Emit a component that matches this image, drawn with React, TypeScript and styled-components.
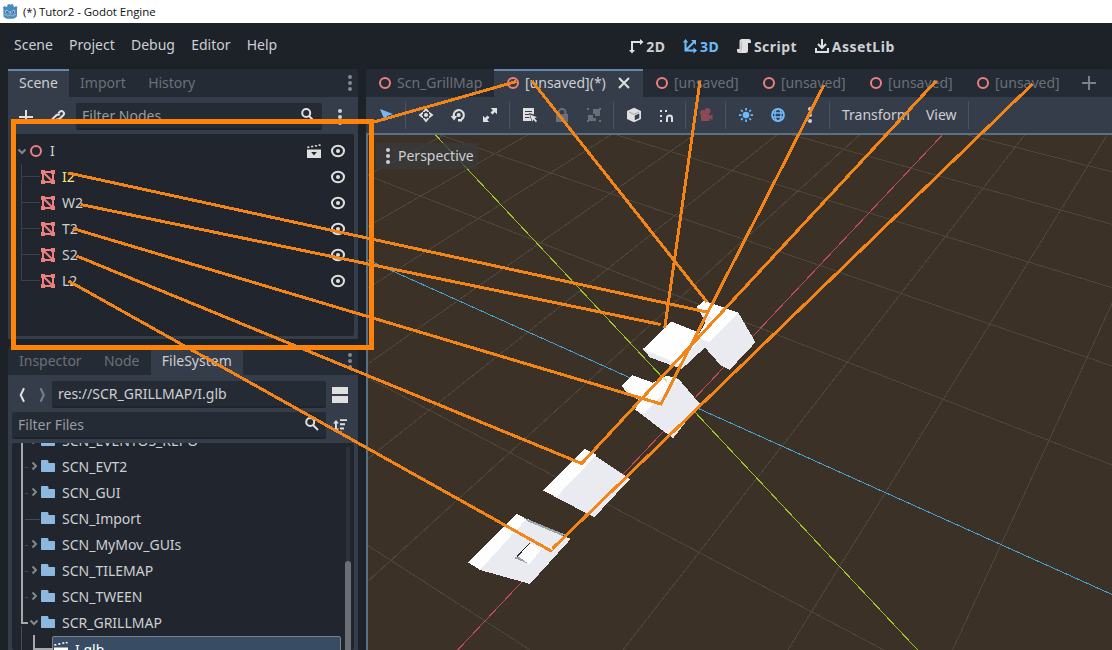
import React from 'react';
import styled, { createGlobalStyle, css } from 'styled-components';

const GlobalStyle = createGlobalStyle`
  *, *::before, *::after { box-sizing: border-box; }
  body {
    margin: 0;
    background: #1d2229;
    overflow: hidden;
    font-family: "Noto Sans", sans-serif;
    font-size: 14px;
    color: #cdcfd2;
  }
  svg { display: block; flex: none; }
`;

const Window = styled.div`
  position: relative;
  display: flex;
  flex-direction: column;
  width: 1112px;
  height: 650px;
  overflow: hidden;
  white-space: nowrap;
`;

const TitleBar = styled.div`
  display: flex;
  align-items: center;
  flex: none;
  height: 23px;
  padding-left: 2px;
  gap: 5px;
  background: #fff;
  color: #111;
  font-family: "Open Sans", sans-serif;
  font-size: 11.5px;
  letter-spacing: -0.05px;
`;

const MenuBar = styled.div`
  display: flex;
  align-items: center;
  flex: none;
  height: 46px;
  padding: 0 0 3px 6px;
`;

const MenuItem = styled.div`
  padding: 0 8.2px 1px 8px;
`;

const Workspaces = styled.div`
  display: flex;
  margin-left: 343px;
  padding-top: 3px;
  gap: 16.5px;
`;

const Workspace = styled.div<{ $active?: boolean }>`
  display: flex;
  align-items: center;
  gap: 2px;
  font-weight: 700;
  letter-spacing: 0.5px;
  color: ${(p) => (p.$active ? '#70bafa' : '#cdcfd2')};
`;

const Body = styled.div`
  display: flex;
  flex: 1;
  min-height: 0;
  gap: 8px;
  padding-left: 8px;
`;

const LeftColumn = styled.div`
  display: flex;
  flex-direction: column;
  flex: none;
  width: 350px;
  gap: 8px;
`;

const Dock = styled.section<{ $height?: number }>`
  display: flex;
  flex-direction: column;
  min-height: 0;
  ${(p) => (p.$height ? css`flex: none; height: ${p.$height}px;` : css`flex: 1;`)}
  background: #363d4a;
  border-radius: 3px 3px 0 0;
`;

const TabBar = styled.div`
  display: flex;
  align-items: center;
  flex: none;
  height: 28px;
  background: #252b34;
  border-radius: 2px 2px 0 0;
`;

const Tab = styled.div<{ $active?: boolean; $plain?: boolean; $w?: number }>`
  display: flex;
  align-items: center;
  gap: 4px;
  height: 28px;
  padding: 0 11.25px 1px 11px;
  ${(p) => p.$w && css`flex: none; width: ${p.$w}px; padding-right: 0;`}
  color: ${(p) => (p.$active ? '#cdcfd2' : '#6b7078')};
  ${(p) => p.$active && css`background: #363d4a;`}
  ${(p) => p.$active && !p.$plain && css`box-shadow: inset 0 2px 0 #6488ad;`}
`;

const TabText = styled.span`
  padding-bottom: 1px;
`;

const CloseButton = styled.div`
  margin: 0 0 0 6px;
`;

const Spacer = styled.div`
  flex: 1;
`;

const TabMenu = styled.div`
  width: 16px;
  color: #858a91;
`;

const ToolRow = styled.div<{ $gap?: string }>`
  display: flex;
  align-items: center;
  flex: none;
  padding: ${(p) => p.$gap || '6px 4px 4px'};
`;

const IconCell = styled.div<{ $w?: number; $dim?: boolean }>`
  display: flex;
  align-items: center;
  justify-content: center;
  flex: none;
  width: ${(p) => p.$w || 32}px;
  height: 26px;
  opacity: ${(p) => (p.$dim ? 0.3 : 1)};
`;

const Field = styled.div<{ $w: number; $hint?: boolean }>`
  display: flex;
  align-items: center;
  justify-content: space-between;
  flex: none;
  width: ${(p) => p.$w}px;
  height: 27px;
  padding: 0 6px 1px 6px;
  background: #252b34;
  border-bottom: 2px solid #1f242c;
  border-radius: 2px;
  color: ${(p) => (p.$hint ? '#989ca2' : '#cdcfd2')};
`;

const Tree = styled.div<{ $shift?: number }>`
  position: relative;
  flex: 1;
  min-height: 0;
  margin: 0 4px;
  padding-top: ${(p) => p.$shift || 0}px;
  overflow: hidden;
  background: #21262e;
  border-radius: 2px;
`;

const TreeScroll = styled.div`
  margin-top: -16px;
`;

const Connectors = styled.svg`
  position: absolute;
  left: 0;
  top: 0;
`;

const Row = styled.div<{ $indent: number; $tone?: string }>`
  display: flex;
  align-items: center;
  height: 26px;
  padding: 0 4px 0 ${(p) => p.$indent}px;
  color: ${(p) => p.$tone || '#cdcfd2'};
`;

const Label = styled.span<{ $lift?: boolean }>`
  flex: 1;
  margin-left: 6px;
  padding-bottom: ${(p) => (p.$lift ? 2 : 0)}px;
`;

const SelectedRow = styled.div`
  display: flex;
  align-items: center;
  gap: 6px;
  width: 289px;
  height: 26px;
  margin: 1px 0 0 40px;
  background: #384d64;
  border: 1px solid #77838f;
  border-radius: 2px;
  color: #fff;
`;

const ScrollTrack = styled.div`
  position: absolute;
  right: 4px;
  top: 4px;
  bottom: 0;
  width: 4px;
  background: #2d3138;
`;

const ScrollThumb = styled.div`
  position: absolute;
  left: -1px;
  top: 114px;
  bottom: 0;
  width: 6px;
  border-radius: 3px 3px 0 0;
  background: #6b6f75;
`;

const Main = styled.div`
  display: flex;
  flex-direction: column;
  flex: 1;
  min-width: 0;
`;

const Toolbar = styled.div`
  display: flex;
  align-items: center;
  flex: none;
  height: 36px;
  padding-left: 4px;
  background: #363d4a;
`;

const Separator = styled.div`
  width: 8px;
  height: 28px;
  border-left: 3px solid transparent;
  &::before {
    content: '';
    display: block;
    width: 1px;
    height: 28px;
    background: #4d535e;
  }
`;

const ToolLabel = styled.div`
  padding: 0 8px 1px;
`;

const Viewport = styled.div`
  position: relative;
  flex: 1;
  min-height: 0;
  border: 2px solid #577186;
  border-width: 2px 0 0 2px;
  background: #3c3126;
  overflow: hidden;
`;

const ViewButton = styled.div`
  position: absolute;
  left: 8px;
  top: 8px;
  display: flex;
  align-items: center;
  gap: 2px;
  width: 102px;
  height: 26px;
  padding: 0 0 1px 4px;
  background: rgba(58, 58, 62, 0.75);
  border-radius: 2px;
`;

const Annotations = styled.svg`
  position: absolute;
  left: 0;
  top: 0;
  pointer-events: none;
`;

/* ---------- icons, drawn on a 16px grid ---------- */

const W = '#e0e0e0';
const RED = '#ee7f7f';

type IconProps = { color?: string; children?: React.ReactNode };
const Icon = ({ color = W, children }: IconProps) => (
  <svg width="16" height="16" viewBox="0 0 16 16" fill={color} color={color}>
    {children}
  </svg>
);
const stroke = (w: number) => ({ fill: 'none', stroke: 'currentColor', strokeWidth: w });

const GodotLogo = () => (
  <svg width="16" height="17" viewBox="0 0 16 17">
    <path
      d="M1.4 6.2 1 4.2l1.7-1.3 1.4 1 1.3-.6L5.5 1.5l2-.6.9 1.3.9-1.3 2 .6.1 1.8 1.3.6 1.4-1 1.3 1.3-.4 2v6.2c0 2.2-3 3.4-6.8 3.4s-6.8-1.2-6.8-3.4z"
      fill="#478cbf"
    />
    <circle cx="4.8" cy="8.8" r="1.7" fill="#b9d3e8" />
    <circle cx="11.5" cy="8.8" r="1.7" fill="#b9d3e8" />
    <circle cx="5" cy="8.9" r="1" fill="#414f60" />
    <circle cx="11.3" cy="8.9" r="1" fill="#414f60" />
    <path d="M7.6 8.3h1.1v2.2H7.6z" fill="#c9deee" />
    <path d="M2 11.7h2.4l.5 1.2h2l.4-1h1.7l.4 1h2l.5-1.2h2.4" fill="none" stroke="#a4c6e1" strokeWidth=".8" />
  </svg>
);

const Ring = ({ size = 5 }: { size?: number }) => (
  <Icon color={RED}>
    <circle cx="8" cy="8" r={size} {...stroke(2)} />
  </Icon>
);
const Dots = () => (
  <Icon color="currentColor">
    <circle cx="8" cy="2" r="2" />
    <circle cx="8" cy="8" r="2" />
    <circle cx="8" cy="14" r="2" />
  </Icon>
);
const Plus = ({ color }: { color?: string }) => (
  <Icon color={color}>
    <path d="M7 1h2v6h6v2H9v6H7V9H1V7h6z" />
  </Icon>
);
const Link = () => (
  <Icon>
    <path d="M6.3 9.7a2.4 2.4 0 0 0 3.4 0l3.5-3.4a2.4 2.4 0 0 0-3.4-3.5L8.4 4.2M9.7 6.3a2.4 2.4 0 0 0-3.4 0L2.8 9.8a2.4 2.4 0 0 0 3.4 3.4l1.4-1.4" {...stroke(2)} />
  </Icon>
);
const Search = () => (
  <Icon>
    <circle cx="6.2" cy="6" r="4" {...stroke(2)} />
    <path d="m9 9 5 5" {...stroke(2)} />
  </Icon>
);
const MeshNode = () => (
  <Icon color={RED}>
    <path d="M3 3h10v10H3zM3 3l10 10" {...stroke(2)} />
    <path d="M1 1h4v4H1zM11 1h4v4h-4zM1 11h4v4H1zM11 11h4v4h-4z" />
  </Icon>
);
const Eye = () => (
  <Icon>
    <ellipse cx="8" cy="8" rx="6" ry="5.2" {...stroke(2)} />
    <circle cx="8" cy="8" r="2" />
  </Icon>
);
const Clapper = () => (
  <Icon>
    <path d="M1 6.5h14V15H1zM1 3.7l2-.4.7 1.5-2 .4zM4.8 3l2-.4.7 1.5-2 .4zM8.6 2.3l2-.4.7 1.5-2 .4zM12.2 1.6l2-.4.7 1.5-2 .4z" />
    <path d="M5.2 9h5.6L8 12.6z" fill="#21262e" />
  </Icon>
);
const Film = () => (
  <Icon color="#fff">
    <path d="M1 6.5h14V15H1zM1 3.2l2-.3.6 1.5-2 .3zM5 2.4l2-.3.6 1.5-2 .3zM9 1.6l2-.3.6 1.5-2 .3zM12.6 1l1.7-.3.6 1.5-1.8.3z" />
  </Icon>
);
const Folder = () => (
  <Icon color="#8cb8e0">
    <path d="M1 3.2C1 2.3 1.4 2 2.2 2H7c1 0 1.500.700 1.500 1.600V5H14c.7 0 1 .4 1 1v7.200c0 .6-.3.8-.8.8H1.800c-.5 0-.8-.2-.8-.8z" />
  </Icon>
);
const Arrow = ({ open }: { open?: boolean }) => (
  <svg width="12" height="12" viewBox="0 0 12 12">
    <path d={open ? 'M2.500 4.500 6 8l3.500-3.500' : 'M4.500 2.500 8 6 4.500 9.500'} fill="none" stroke="#84878c" strokeWidth="2" />
  </svg>
);
const Chevron = ({ left, color }: { left?: boolean; color?: string }) => (
  <Icon color={color}>
    <path d={left ? 'M10 1.200 6.700 8l3.300 6.800' : 'M6.500 1.200 9.800 8l-3.300 6.800'} {...stroke(2)} />
  </Icon>
);
const SplitMode = () => (
  <Icon>
    <path d="M0 0h16v7H0zM0 9h16v7H0z" />
  </Icon>
);
const Sort = () => (
  <Icon>
    <path d="M8 1.200h7v1.900H8zM8 5.300h5v1.900H8zM8 9.500h4v1.900H8zM8 13.500h2v1.900H8zM3 4.500h1.900v7H3z" />
    <path d="M1 5.500 4 2l3 3.500zM1 10.500 4 14l3-3.500z" />
  </Icon>
);
const TwoD = () => (
  <Icon>
    <path d="M4 12.500V4h8.500" {...stroke(2)} />
    <path d="M12 1v6l3.500-3zM1 12h6l-3 3.500z" />
  </Icon>
);
const ThreeD = () => (
  <Icon color="#70bafa">
    <path d="M3.500 3v9.500H13M4 12l8.500-8.500" {...stroke(2)} />
    <path d="M.8 4.500 3.500 1l2.800 3.500zM11.500 9.500v6l3.500-3zM9 2h5v5z" />
  </Icon>
);
const ScriptIcon = () => (
  <Icon>
    <path d="M6 1a2.500 2.500 0 0 0-2.500 2.500V11H1v1.500A2.500 2.500 0 0 0 3.500 15H10a2 2 0 0 0 2-2V5h3V3.300A2.300 2.300 0 0 0 12.700 1z" />
    <path d="M5.300 5V3.600M3.300 13.300h1.400M5.200 5v7.500" fill="none" stroke="#a5a8ab" strokeWidth=".8" />
  </Icon>
);
const Download = () => (
  <Icon>
    <path d="M8 1v8M4 6l4 4 4-4" {...stroke(2)} />
    <path d="M2 10v4h12v-4" {...stroke(2)} />
  </Icon>
);
const Close = () => (
  <Icon>
    <path d="m3 3 10 10M13 3 3 13" {...stroke(2)} />
  </Icon>
);
const Select = () => (
  <Icon color="#70bafa">
    <path d="M2 2l5 12 2-5 6-2z" />
  </Icon>
);
const Move = () => (
  <Icon>
    <circle cx="8" cy="8" r="2" />
    <path d="M8 .5 11.500 5H9.300L8 3.600 6.700 5H4.500zM8 15.500l3.500-4.500H9.300L8 12.400 6.700 11H4.500zM.5 8 5 4.500v2.200L3.600 8 5 9.300v2.200zM15.500 8 11 4.500v2.200L12.400 8 11 9.300v2.200z" />
  </Icon>
);
const Rotate = () => (
  <Icon>
    <path d="M4 9.500A5 5 0 1 1 11.500 12.300" {...stroke(2.200)} />
    <path d="M.7 9h6.600L4 13.500zM8 12h4v2.400H8z" />
    <circle cx="8.700" cy="8" r="2" />
  </Icon>
);
const Scale = () => (
  <Icon>
    <path d="M9 1h6v6l-2-2-2.500 2.500-2-2L11 3zM7 15H1V9l2 2 2.500-2.500 2 2L5 13z" />
    <path d="M9 1h6v6zM7 15H1V9z" />
  </Icon>
);
const ListSelect = () => (
  <Icon>
    <path d="M1 1h11v6.500L7 6l2.500 8H1zM3 4v1h7V4zm0 3v1h4V7zm0 3v1h4.500v-1z" fillRule="evenodd" />
    <path d="m8 7.500 7 2.800-2.500 1L15 14l-1.200 1.200-2.500-2.600-.9 2.200z" />
  </Icon>
);
const Lock = () => (
  <Icon>
    <path d="M4.500 8V5.500a3.500 3.500 0 0 1 7 0V8" {...stroke(2)} />
    <path d="M2 7h12v8H2z" />
  </Icon>
);
const Group = () => (
  <Icon>
    <path d="M1 1h2v2H1zM13 1h2v2h-2zM1 13h2v2H1zM13 13h2v2h-2zM7 2h7v7H9V7H7zM2 8h5v3h3v3H2z" />
  </Icon>
);
const Cube = () => (
  <Icon>
    <path d="M8 .8 15 4v8l-7 3.300L1 12V4zM8.800 8.500v4.800l4.500-2.200V6.400z" fillRule="evenodd" />
    <path d="M3 5l5 2.400L13 5" fill="none" stroke="#8e939b" strokeWidth=".8" />
  </Icon>
);
const Snap = () => (
  <Icon>
    <path d="M9 15v-4a2.500 2.500 0 0 1 5 0v4" {...stroke(2)} />
    <path d="M2 3h2v2H2zM7 3h2v2H7zM2 8h2v2H2zM2 13h2v2H2z" />
  </Icon>
);
const Camera = () => (
  <Icon color="#8c4a54">
    <circle cx="5" cy="6" r="3" />
    <circle cx="9.500" cy="4" r="3" />
    <path d="M3 7h8.500v2l3-1.800v6l-3-1.700V14H3z" />
  </Icon>
);
const Sun = () => (
  <Icon color="#70bafa">
    <circle cx="8" cy="8" r="3.300" />
    <path d="M7.200 1h1.700v2.500H7.200zM7.200 12.500h1.700V15H7.200zM1 7.200h2.500v1.700H1zM12.500 7.200H15v1.700h-2.500z" />
    <path d="m3 3 1.700 1.700M13 3l-1.700 1.700M3 13l1.700-1.700M13 13l-1.700-1.700" {...stroke(1.700)} />
  </Icon>
);
const Globe = () => (
  <Icon color="#70bafa">
    <circle cx="8" cy="8" r="6" {...stroke(1.800)} />
    <ellipse cx="8" cy="8" rx="3" ry="6" {...stroke(1.300)} />
    <path d="M2.500 6h11M2.500 10h11" {...stroke(1.300)} />
  </Icon>
);

/* ---------- 3D scene ---------- */

const VIEW = { x: 368, y: 135, w: 744, h: 515 };

/* Projects a point of the floor grid to window coordinates. */
const project = (u: number, v: number) => {
  const w = 1 - 0.04985 * u - 0.1081 * v;
  return [
    736 + (272.97 * u - 223.7 * v - 142.8) / w / 3,
    130 + (77.95 * u + 165.1 * v + 824.1) / w / 3,
  ];
};

const range = (from: number, to: number) =>
  Array.from({ length: to - from + 1 }, (_, i) => from + i);

const gridPath = [
  ...range(-9, 6).filter((u) => u !== 0).map((u) => [project(u, -9), project(u, 4)]),
  ...range(-7, 3).filter((v) => v !== 0).map((v) => [project(-14, v), project(6, v)]),
]
  .map(([a, b]) => `M${a[0].toFixed(1)} ${a[1].toFixed(1)}L${b[0].toFixed(1)} ${b[1].toFixed(1)}`)
  .join('');

const SHADE = '#eaebf0';
const LIT = '#fefefe';

const meshes: Array<[string, string]> = [
  ['697,306.700 704.300,300.700 738.300,312.700 755.500,342.300 729.500,370 721,365.700 704.500,347 699.300,340 699,334 705.500,322', SHADE],
  ['697,306.700 704.300,300.700 738.300,312.700 709.500,342 700,338.500 699,334 706,324 712,318 704,313', LIT],
  ['643,349 671,321.500 699,332.500 705,347.500 681.700,369 650,357.500', SHADE],
  ['643,349 671,321.500 699,332.500 700,340 678.700,364', LIT],
  ['622,386 632.700,375.300 653,382.700 667,375.500 678.500,379 700,404 673,438.300 635,409.500 640,401 627,393', SHADE],
  ['622,386 632.700,375.300 653,382.700 667,375.500 678.500,379 643.500,414 635,409.500 641,400', LIT],
  ['543.300,490.700 585,449 630,479 594.300,517.300', SHADE],
  ['543.300,490.700 585,449 596.500,455 556.500,496.700', LIT],
  ['468,562.300 516.700,514 570.700,539 530,584 480,570', SHADE],
  ['468,562.300 516.700,514 526.500,519 480,570', LIT],
  ['523,517.300 565,534.500 562.500,536 528,521.500', '#9ba3ae'],
  ['529,543.500 543,547.500 529.300,564 517,556.500', LIT],
  ['514,558 517.500,556 529,564', '#98a0ab'],
];

const Scene = () => (
  <svg width={VIEW.w} height={VIEW.h} viewBox={`${VIEW.x} ${VIEW.y} ${VIEW.w} ${VIEW.h}`} shapeRendering="crispEdges">
    <path d={gridPath} stroke="#4f463b" fill="none" />
    <path d="M368 260 1112 594.500" stroke="#479fd0" />
    <path d="M943.700 133.500 457.700 650" stroke="#c04a5a" />
    <path d="M434 133.300 917.700 650" stroke="#9cc526" />
    {meshes.map(([points, fill]) => (
      <polygon key={points} points={points} fill={fill} />
    ))}
    <path d="M661 375.500 667 381.500" stroke="#cfe37a" />
    <path d="M529.500 543.500 517 556.500" stroke="#222" />
  </svg>
);

const pointers = [
  'M374 122 516.500 81.500',
  'M532 81 707 302',
  'M700 81 664.700 328',
  'M824 85 661 404 72.700 228.500',
  'M936 81 581.700 463.500 76.700 256',
  'M1032.500 84 552.500 548.500',
  'M68.500 173 706.700 312',
  'M80.700 204.500 660.700 324.500',
  'M68.500 281 552 551.500',
];

const nodes = ['I2', 'W2', 'T2', 'S2', 'L2'];
const folders = ['SCN_EVENTOS_REPO', 'SCN_EVT2', 'SCN_GUI', 'SCN_Import', 'SCN_MyMov_GUIs', 'SCN_TILEMAP', 'SCN_TWEEN', 'SCR_GRILLMAP'];
const tabs = ['[unsaved]', '[unsaved]', '[unsaved]', '[unsaved]'];

export default function App() {
  return (
    <Window>
      <GlobalStyle />
      <TitleBar>
        <GodotLogo />
        <span>(*) Tutor2 - Godot Engine</span>
      </TitleBar>
      <MenuBar>
        {['Scene', 'Project', 'Debug', 'Editor', 'Help'].map((m) => (
          <MenuItem key={m}>{m}</MenuItem>
        ))}
        <Workspaces>
          <Workspace><TwoD />2D</Workspace>
          <Workspace $active><ThreeD />3D</Workspace>
          <Workspace><ScriptIcon />Script</Workspace>
          <Workspace><Download />AssetLib</Workspace>
        </Workspaces>
      </MenuBar>
      <Body>
        <LeftColumn>
          <Dock $height={270}>
            <TabBar>
              <Tab $active><TabText>Scene</TabText></Tab>
              <Tab><TabText>Import</TabText></Tab>
              <Tab><TabText>History</TabText></Tab>
              <Spacer />
              <TabMenu><Dots /></TabMenu>
            </TabBar>
            <ToolRow>
              <IconCell $w={28}><Plus /></IconCell>
              <IconCell $w={36}><Link /></IconCell>
              <Field $w={246} $hint>Filter Nodes<Search /></Field>
              <IconCell $w={36}><Dots /></IconCell>
            </ToolRow>
            <Tree $shift={4}>
              <Connectors width="40" height="200" shapeRendering="crispEdges">
                <path d="M9.500 30V146.500M9.500 42.500H28M9.500 68.500H28M9.500 94.500H28M9.500 120.500H28M9.500 146.500H28" stroke="#3c424c" fill="none" />
              </Connectors>
              <Row $indent={4}>
                <Arrow open />
                <Ring size={5} />
                <Label $lift>I</Label>
                <IconCell $w={24}><Clapper /></IconCell>
                <IconCell $w={24}><Eye /></IconCell>
              </Row>
              {nodes.map((n) => (
                <Row key={n} $indent={28} $tone={n === 'I2' ? '#ffe27a' : undefined}>
                  <MeshNode />
                  <Label $lift>{n}</Label>
                  <IconCell $w={24}><Eye /></IconCell>
                </Row>
              ))}
            </Tree>
            <ToolRow $gap="0 0 3px" />
          </Dock>
          <Dock>
            <TabBar>
              <Tab><TabText>Inspector</TabText></Tab>
              <Tab><TabText>Node</TabText></Tab>
              <Tab $active $plain><TabText>FileSystem</TabText></Tab>
              <Spacer />
              <TabMenu><Dots /></TabMenu>
            </TabBar>
            <ToolRow $gap="6px 4px 4px">
              <IconCell $w={20}><Chevron left /></IconCell>
              <IconCell $w={20}><Chevron color="#7c8189" /></IconCell>
              <Field $w={274}>res://SCR_GRILLMAP/I.glb</Field>
              <IconCell $w={28}><SplitMode /></IconCell>
            </ToolRow>
            <ToolRow $gap="0 4px 4px">
              <Field $w={314} $hint>Filter Files<Search /></Field>
              <IconCell $w={28}><Sort /></IconCell>
            </ToolRow>
            <Tree>
              <Connectors width="60" height="210" shapeRendering="crispEdges">
                <path d="M10 0V180H16M22 192V206H41" stroke="#a6a8ac" strokeWidth="2" fill="none" />
                <path d="M13 24.500h3M13 50.500h3M13 76.500h15M13 102.500h3M13 128.500h3M13 154.500h3M9.500 183v30" stroke="#464b54" fill="none" />
              </Connectors>
              <TreeScroll>
                {folders.map((f) => (
                  <Row key={f} $indent={f === 'SCN_Import' ? 28 : 16}>
                    {f !== 'SCN_Import' && <Arrow open={f === 'SCR_GRILLMAP'} />}
                    <Folder />
                    <Label>{f}</Label>
                  </Row>
                ))}
                <SelectedRow><Film />I.glb</SelectedRow>
              </TreeScroll>
              <ScrollTrack><ScrollThumb /></ScrollTrack>
            </Tree>
          </Dock>
        </LeftColumn>
        <Main>
          <TabBar>
            <Tab $w={128}><Ring /><TabText>Scn_GrillMap</TabText></Tab>
            <Tab $w={149} $active><Ring /><TabText>[unsaved](*)</TabText><CloseButton><Close /></CloseButton></Tab>
            {tabs.map((t, i) => (
              <Tab key={i} $w={107}><Ring /><TabText>{t}</TabText></Tab>
            ))}
            <IconCell $w={36}><Plus color="#7b8087" /></IconCell>
          </TabBar>
          <Toolbar>
            <IconCell><Select /></IconCell>
            <Separator />
            <IconCell><Move /></IconCell>
            <IconCell><Rotate /></IconCell>
            <IconCell><Scale /></IconCell>
            <Separator />
            <IconCell><ListSelect /></IconCell>
            <IconCell $dim><Lock /></IconCell>
            <IconCell $dim><Group /></IconCell>
            <Separator />
            <IconCell><Cube /></IconCell>
            <IconCell><Snap /></IconCell>
            <Separator />
            <IconCell><Camera /></IconCell>
            <Separator />
            <IconCell><Sun /></IconCell>
            <IconCell><Globe /></IconCell>
            <IconCell><Dots /></IconCell>
            <Separator />
            <ToolLabel>Transform</ToolLabel>
            <ToolLabel>View</ToolLabel>
            <Separator />
          </Toolbar>
          <Viewport>
            <Scene />
            <ViewButton><Dots />Perspective</ViewButton>
          </Viewport>
        </Main>
      </Body>
      <Annotations width="1112" height="650" fill="none" shapeRendering="crispEdges">
        <rect x="13.500" y="121.500" width="358" height="226" stroke="#fe8308" strokeWidth="5" />
        {pointers.map((d) => (
          <path key={d} d={d} stroke="#f28418" strokeWidth="3" />
        ))}
      </Annotations>
    </Window>
  );
}
